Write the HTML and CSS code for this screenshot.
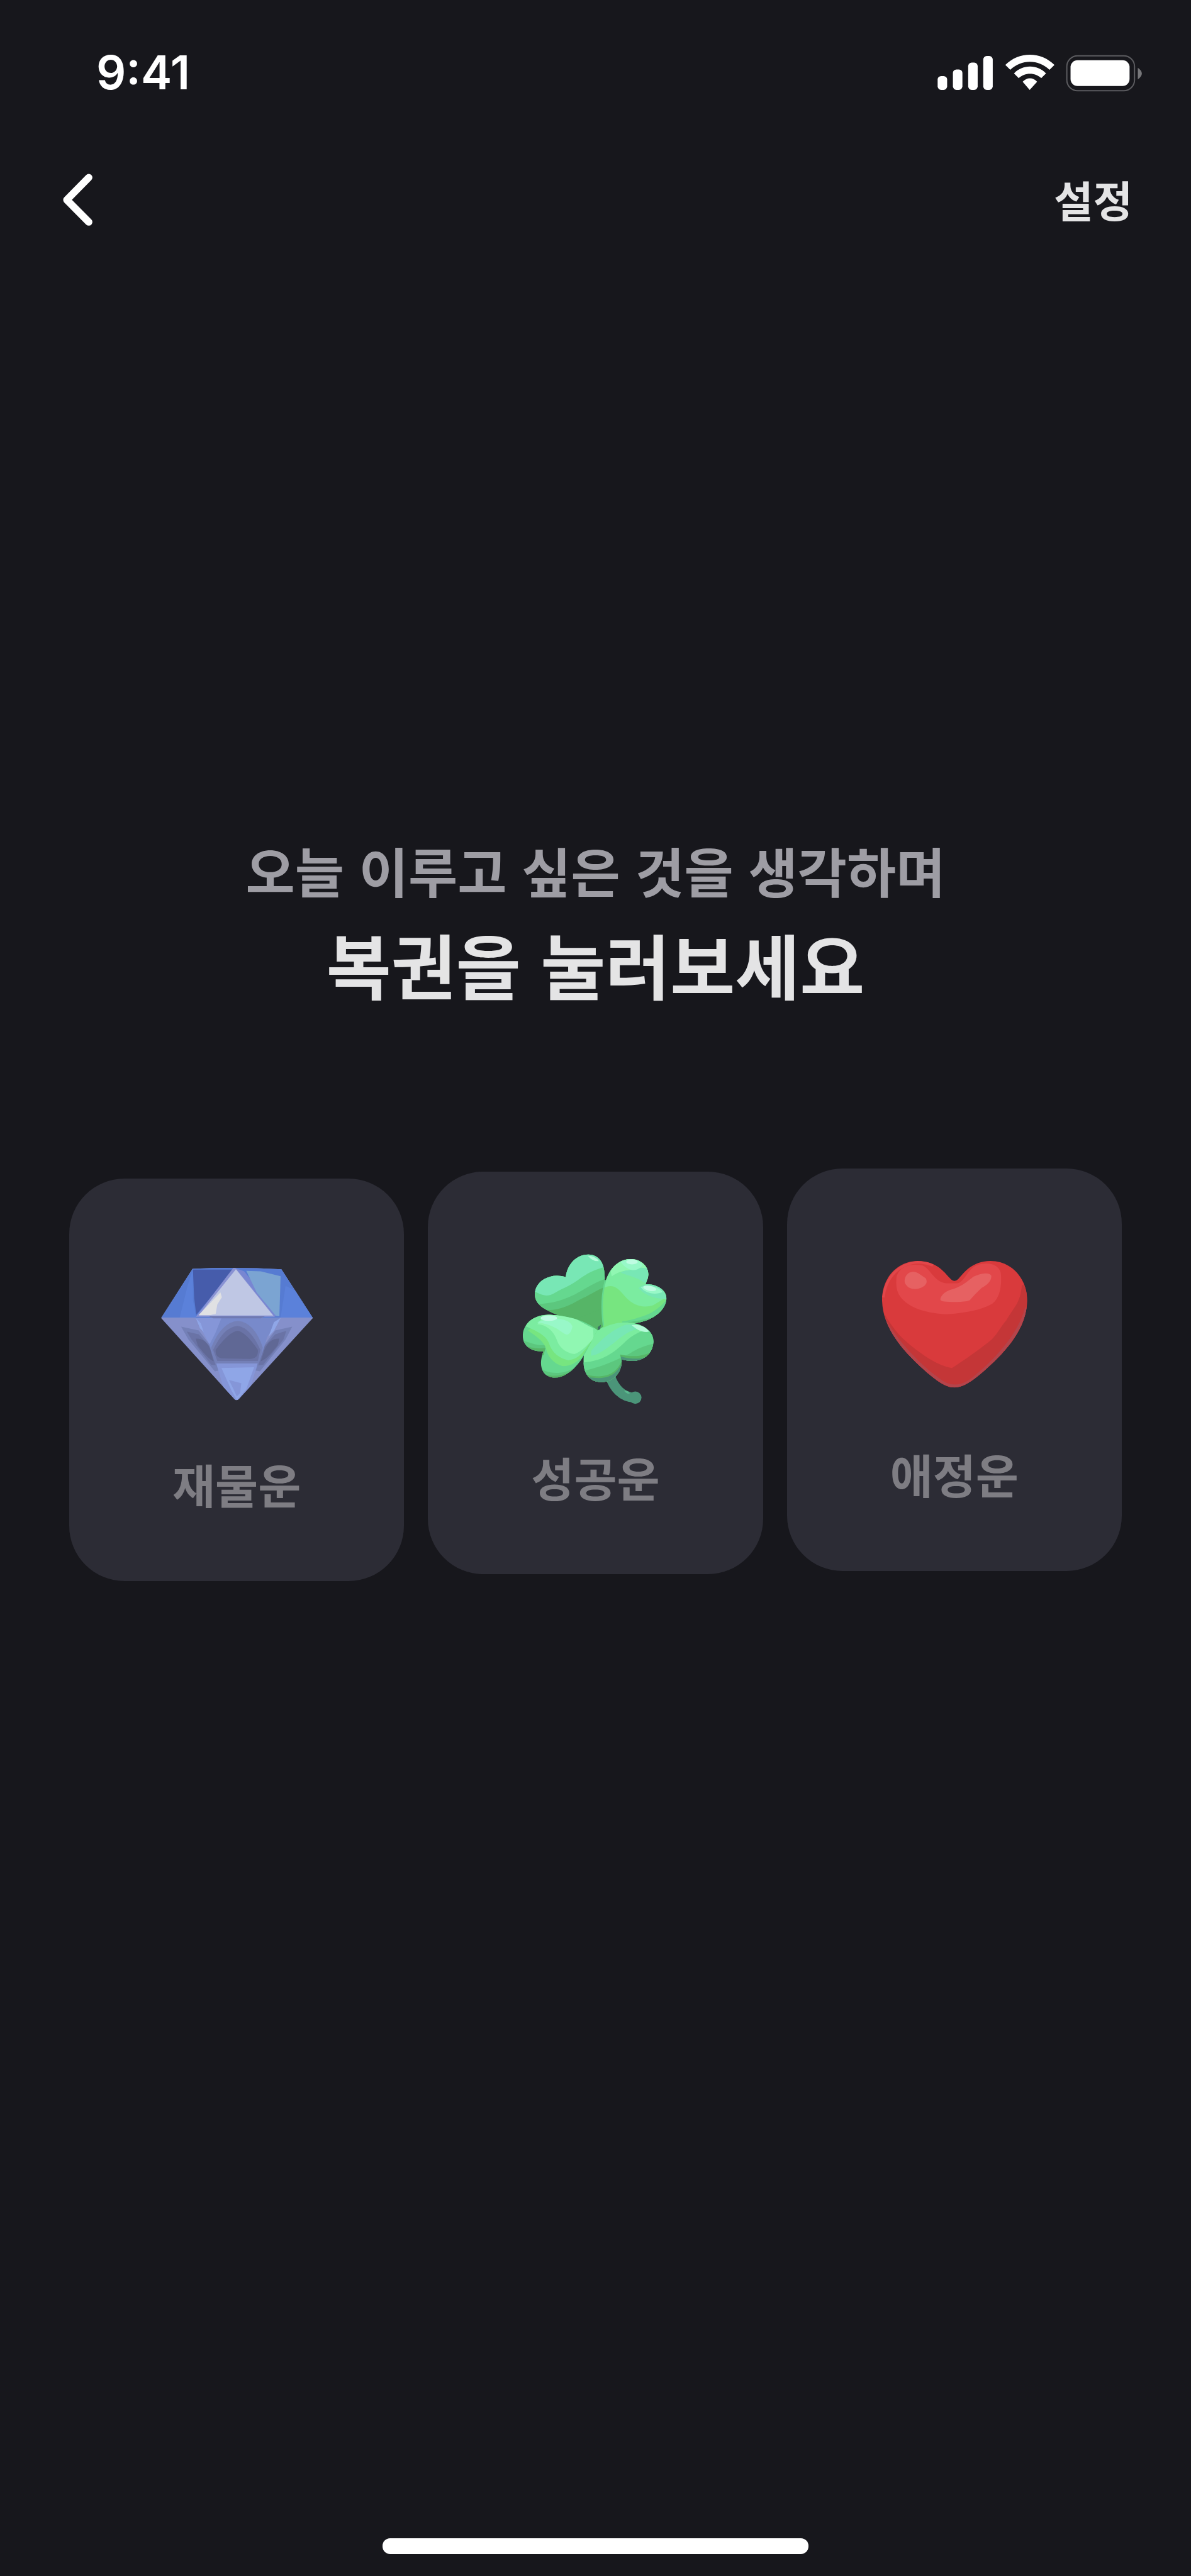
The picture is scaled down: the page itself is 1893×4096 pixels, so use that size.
FILE: index.html
```html
<!DOCTYPE html>
<html lang="ko">
<head>
    <meta charset="UTF-8">
    <meta name="viewport" content="width=device-width, initial-scale=1.0">
    <title>행운복권</title>
    <link rel="stylesheet" href="styles.css">
</head>
<body>
    <div class="screen">
        <div class="status-bar">
            <span class="time">9:41</span>
            <svg class="status-icons" viewBox="150 105 1000 185" aria-hidden="true">
                <!-- signal -->
                <g fill="#fff">
                    <rect x="154" y="214" width="46" height="67" rx="17" />
                    <rect x="228" y="182" width="46" height="99" rx="17" />
                    <rect x="302" y="149" width="46" height="132" rx="17" />
                    <rect x="375" y="117" width="46" height="164" rx="17" />
                </g>
                <!-- wifi -->
                <g fill="#fff">
                    <path d="M482 160 C548 94 654 94 720 160 L696 184 C642 132 560 132 506 184 Z" />
                    <path d="M524 201 C567 157 636 157 679 201 L656 224 C625 196 578 196 547 224 Z" />
                    <path d="M566 242 C584 219 619 219 636 242 L600 281 Z" />
                </g>
                <!-- battery -->
                <rect x="780" y="116" width="328" height="169" rx="52" fill="none" stroke="#5c5c60" stroke-width="6" />
                <rect x="798" y="137" width="286" height="125" rx="34" fill="#fff" />
                <path d="M1124 174 C1150 192 1150 212 1124 230 Z" fill="#77777a" />
            </svg>
        </div>

        <header class="nav">
            <button class="nav-button" type="button" aria-label="뒤로">
                <svg class="back-icon" viewBox="110 680 170 270" aria-hidden="true">
                    <path d="M250 708 L144 816 L250 923" fill="none" stroke="#fff" stroke-width="35" stroke-linecap="round" stroke-linejoin="round" />
                </svg>
            </button>
            <button class="nav-button" type="button">설정</button>
        </header>

        <main class="content">
            <p class="subtitle">오늘 이루고 싶은 것을 생각하며</p>
            <h1 class="title">복권을 눌러보세요</h1>

            <div class="cards">
                <button class="card card-money" type="button">
                    <svg class="card-icon" viewBox="3 0 840 840" aria-hidden="true">
                        <defs>
                            <clipPath id="gem">
                                <path d="M210 108 Q420 98 640 110 L792 346 L434 738 Q425 748 414 740 L58 346 Z" />
                            </clipPath>
                        </defs>
                        <g clip-path="url(#gem)">
                            <rect width="840" height="840" fill="#8590cb" />
                            <!-- crown -->
                            <path d="M40 344 V90 H800 V344 Z" fill="#567bd2" />
                            <path d="M212 108 L186 190 L148 344 H228 L212 260 Z" fill="#5b81da" />
                            <path d="M660 190 L636 344 H800 L720 220 Z" fill="#5b81da" />
                            <path d="M212 112 H410 L228 330 L218 250 Z" fill="#465cab" />
                            <path d="M420 106 L460 120 L630 335 L598 340 Z" fill="#7886d2" />
                            <path d="M470 118 L540 120 L636 144 L630 338 L612 334 L520 222 Z" fill="#7ba4d2" />
                            <path d="M410 100 L420 106 L608 340 H226 Z" fill="#8992d3" />
                            <path d="M420 110 L600 334 H240 Z" fill="#bfc7e4" />
                            <path d="M345 222 L352 246 L330 280 L322 326 L296 332 H240 Z" fill="#e0e1e3" />
                            <!-- pavilion -->
                            <path d="M226 344 H632 L570 440 L525 600 H320 L290 470 Z" fill="#788acb" />
                            <path d="M226 346 H350 L320 420 L292 475 L258 410 Z" fill="#8596d8" />
                            <path d="M226 346 L250 372 L264 414 L246 396 Z M636 346 L604 366 L578 436 L604 408 Z" fill="#8fa6e7" />
                            <path d="M290 338 H560 L540 348 H310 Z" fill="#6f7ab2" />
                            <path d="M300 490 Q350 366 430 360 Q510 368 550 490 L530 580 H325 Z" fill="#7480b7" />
                            <path d="M310 500 Q360 390 428 384 Q490 392 538 500 L526 554 H330 Z" fill="#6a73a6" />
                            <path d="M322 500 Q390 410 430 408 Q468 416 526 500 Q530 542 490 544 L360 542 Q318 540 322 500 Z" fill="#606895" />
                            <path d="M155 388 L240 406 L290 470 L336 600 L318 604 L190 450 Z" fill="#7480b7" />
                            <path d="M182 412 L240 425 L290 480 L322 575 L300 572 L205 450 Z" fill="#6a73a6" />
                            <path d="M225 446 Q270 442 294 492 L312 555 Q290 550 236 480 Z" fill="#606895" />
                            <path d="M692 388 L610 406 L562 470 L516 600 L536 604 L660 450 Z" fill="#7480b7" />
                            <path d="M664 408 L610 425 L560 480 L528 575 L552 572 L650 450 Z" fill="#6a73a6" />
                            <path d="M630 446 Q580 444 558 500 L540 555 Q566 550 622 478 Z" fill="#606895" />
                            <path d="M325 566 H525 L490 680 L425 750 L360 685 Z" fill="#8596d8" />
                            <path d="M350 588 L508 584 L470 690 L425 745 L398 696 Z" fill="#8fa6e7" />
                            <path d="M386 646 L446 662 L440 710 L424 726 L408 690 Z" fill="#8596d8" />
                        </g>
                    </svg>
                    <span class="card-label">재물운</span>
                </button>

                <button class="card card-success" type="button">
                    <svg class="card-icon" viewBox="0 0 840 840" aria-hidden="true">
                        <defs>
                            <clipPath id="leafTopLeft">
                                <path d="M278 182 C284 118 332 70 390 72 C444 76 466 120 466 180 L470 300 L460 420 L430 440 L220 358 C166 334 128 310 128 264 C130 196 210 158 278 182 Z" />
                            </clipPath>
                            <clipPath id="leafTopRight">
                                <path d="M460 430 C446 330 454 240 476 186 C498 130 540 94 594 94 C650 96 688 140 674 188 L664 216 C712 214 766 240 765 286 C760 350 690 396 610 404 L540 412 Z" />
                            </clipPath>
                            <clipPath id="leafBottomLeft">
                                <path d="M430 438 C408 480 380 540 350 585 C310 640 262 672 216 668 C160 660 144 606 170 540 C114 544 66 516 70 458 C76 400 130 362 200 364 C300 370 380 396 430 438 Z" />
                            </clipPath>
                            <clipPath id="leafBottomRight">
                                <path d="M400 480 C440 420 520 396 590 402 C650 408 704 442 702 496 C696 570 630 602 548 580 C552 640 510 690 450 690 C390 688 358 646 364 570 C368 530 380 500 400 480 Z" />
                            </clipPath>
                        </defs>
                        <path d="M492 660 C508 714 548 764 612 765" fill="none" stroke="#4b9579" stroke-width="48" />
                        <circle cx="614" cy="765" r="30" fill="#4b9579" />
                        <path d="M560 732 Q572 726 588 744 Q574 750 560 732 Z" fill="#5bb98e" />
                        <g clip-path="url(#leafTopLeft)">
                            <rect width="840" height="840" fill="#56b567" />
                            <path d="M100 50 H480 V222 C430 244 390 270 350 288 C300 316 260 338 190 342 L100 350 Z" fill="#5cc77e" />
                            <path d="M100 50 H480 V186 C420 206 370 240 320 266 C260 294 200 316 110 310 Z" fill="#65d88f" />
                            <path d="M100 50 H480 V130 C420 142 380 164 336 196 C290 230 250 240 218 262 C180 282 150 264 110 240 Z" fill="#78e7b5" />
                            <path d="M384 78 Q420 78 438 104 Q410 108 384 78 Z" fill="#b4fbd9" />
                        </g>
                        <path d="M400 400 L480 380 L560 400 L520 460 L400 500 Z" fill="#7bec9f" />
                        <path d="M340 380 L462 330 V420 L432 440 Z" fill="#56b567" />
                        <g clip-path="url(#leafTopRight)">
                            <rect width="840" height="840" fill="#77e580" />
                            <path d="M450 240 C500 208 530 232 560 270 C600 318 650 334 700 318 L780 270 V80 H460 Z" fill="#7beca0" />
                            <path d="M780 270 C740 330 690 360 640 374 C600 388 570 394 550 396 L560 430 H780 Z" fill="#65d88f" />
                            <path d="M780 330 C720 380 650 390 580 400 V430 H780 Z" fill="#5cc77e" />
                            <path d="M500 178 C530 156 560 150 600 146 L680 200 V80 H480 Z" fill="#90f7b2" />
                            <path d="M544 160 C570 142 600 154 640 136 L690 140 L664 212 C620 180 590 180 544 160 Z" fill="#78e7b5" />
                            <path d="M542 108 C580 86 630 90 650 124 C620 160 580 156 542 108 Z" fill="#98f8c8" />
                            <ellipse cx="598" cy="108" rx="28" ry="12" fill="#bffce2" />
                            <path d="M630 234 C690 190 760 230 766 290 C720 284 670 280 630 234 Z" fill="#78e7b5" />
                            <path d="M640 230 C680 214 730 230 746 254 C710 270 660 260 640 230 Z" fill="#98f8c8" />
                            <ellipse cx="684" cy="236" rx="32" ry="12" fill="#bffce2" transform="rotate(12 684 236)" />
                        </g>
                        <path d="M470 196 C452 260 450 340 460 416" fill="none" stroke="#65d88f" stroke-width="7" />
                        <g clip-path="url(#leafBottomRight)">
                            <rect width="840" height="840" fill="#7bec9f" />
                            <path d="M720 430 C650 438 610 450 560 500 C510 546 460 590 350 596 V720 H720 Z" fill="#65d88f" />
                            <path d="M720 500 C670 510 630 524 590 550 C520 584 470 610 350 640 V720 H720 Z" fill="#5cc77e" />
                            <path d="M720 528 C670 564 610 572 540 556 L548 590 C520 644 480 680 370 652 V720 H720 Z" fill="#56b567" />
                            <path d="M720 542 C670 580 610 584 544 566 L548 600 C520 654 480 686 370 662 V720 H720 Z" fill="#4b9579" />
                            <path d="M400 540 C440 490 510 430 570 412 C610 406 640 414 650 430 C590 434 560 462 520 492 C470 532 430 560 400 562 Z" fill="#78e7b5" />
                            <path d="M596 414 C640 408 670 426 680 446 C650 452 620 436 596 414 Z" fill="#b4fbd9" />
                        </g>
                        <g clip-path="url(#leafBottomLeft)">
                            <rect width="840" height="840" fill="#65d88f" />
                            <path d="M60 486 C110 500 140 516 180 510 L170 560 H60 Z M140 608 C170 650 260 660 320 620 V690 H140 Z" fill="#5cc77e" />
                            <path d="M60 504 C100 524 140 530 180 524 L170 560 H60 Z M140 636 C180 662 240 670 300 640 V690 H140 Z" fill="#56b567" />
                            <path d="M95 440 C120 460 160 480 180 520 C190 570 220 600 260 612 C300 616 340 590 360 560 L440 438 L200 350 Z" fill="#77e580" />
                            <path d="M85 420 C130 440 180 460 196 500 C210 550 250 576 290 584 C330 580 350 560 380 520 L440 438 L200 350 L100 370 Z" fill="#7beca0" />
                            <path d="M140 410 C180 410 220 440 236 490 C250 530 290 552 320 554 C360 540 390 500 412 480 L410 430 L300 370 L180 360 Z" fill="#90f7b2" />
                            <path d="M140 400 C190 380 290 370 310 420 C306 440 300 456 284 460 C250 450 240 416 140 400 Z" fill="#98f8c8" />
                            <ellipse cx="196" cy="380" rx="40" ry="13" fill="#bffce2" />
                        </g>
                        <path d="M432 424 L448 412 L444 434 L434 438 Z" fill="#3d6f62" />
                    </svg>
                    <span class="card-label">성공운</span>
                </button>

                <button class="card card-love" type="button">
                    <svg class="card-icon" viewBox="-4 -45 840 840" aria-hidden="true">
                        <defs>
                            <clipPath id="heart">
                                <path d="M416 170 C386 172 360 74 238 74 C134 76 64 162 66 266 C70 400 170 510 262 594 C330 656 376 686 416 686 C456 686 504 656 572 594 C670 506 764 400 768 266 C768 160 694 74 590 74 C470 76 446 172 416 170 Z" />
                            </clipPath>
                        </defs>
                        <g clip-path="url(#heart)">
                            <rect width="840" height="840" fill="#d93a3c" />
                            <path d="M60 300 C100 370 130 420 190 470 C260 530 340 582 404 592 C460 556 540 500 596 454 C630 420 640 390 668 360 C700 300 736 280 742 190 L800 200 V720 H60 Z" fill="#c43637" />
                            <path d="M66 340 C130 470 270 600 330 642 C390 694 450 692 510 642 C600 570 730 440 766 300" fill="none" stroke="#b4444b" stroke-width="16" />
                            <path d="M72 250 C82 170 130 90 238 80 C250 80 290 84 312 96" fill="none" stroke="#e2464a" stroke-width="12" />
                            <path d="M136 150 C150 96 210 84 262 96 C300 110 316 176 378 182 H430 C466 176 480 108 530 92 C580 76 630 90 640 130 C646 180 640 250 600 280 C550 310 470 326 376 332 C300 326 210 312 160 254 C134 224 132 190 136 150 Z" fill="#e2474a" />
                            <path d="M176 160 C184 128 214 118 240 132 L278 158 C288 180 276 194 254 204 C224 216 196 208 184 192 C174 182 174 172 176 160 Z" fill="#e66162" />
                            <path d="M348 256 C354 236 376 218 400 212 C450 200 480 170 508 150 C540 134 580 126 594 144 C598 166 576 190 548 204 C526 224 508 244 490 264 C470 274 400 274 366 270 C354 268 346 264 348 256 Z" fill="#e66162" />
                        </g>
                    </svg>
                    <span class="card-label">애정운</span>
                </button>
            </div>
        </main>

        <div class="home-indicator"></div>
    </div>
</body>
</html>
```
FILE: styles.css
```css
* {
    box-sizing: border-box;
}

body {
    margin: 0;
    background-color: #17171c;
    color: #e4e4e5;
    font-family: "Noto Sans CJK KR", sans-serif;
}

button {
    padding: 0;
    border: none;
    background: none;
    color: inherit;
    font: inherit;
    cursor: pointer;
}

svg {
    display: block;
}

.screen {
    display: flex;
    flex-direction: column;
    min-height: 100vh;
    padding-bottom: 35px;
}

/* status bar */
.status-bar {
    display: flex;
    align-items: center;
    justify-content: space-between;
    height: 230px;
    padding: 0 76px 0 153px;
}

.time {
    color: #fff;
    font-family: Inter, sans-serif;
    font-size: 74px;
    font-weight: 600;
    line-height: 80px;
}

.status-icons {
    width: 328px;
    height: 61px;
}

/* navigation */
.nav {
    display: flex;
    align-items: center;
    justify-content: space-between;
    height: 174px;
    padding: 0 93px 0 95px;
}

.nav-button {
    font-size: 68px;
    font-weight: 700;
    line-height: 96px;
}

.back-icon {
    width: 56px;
    height: 89px;
}

/* content */
.content {
    padding: 910px 110px 0;
    text-align: center;
}

.subtitle {
    margin: 0;
    color: #9e9da4;
    font-size: 85px;
    font-weight: 700;
    line-height: 138px;
}

.title {
    margin: 0;
    font-size: 112px;
    font-weight: 700;
    line-height: 160px;
}

.cards {
    display: flex;
    align-items: flex-start;
    gap: 38px;
    margin-top: 246px;
}

.card {
    display: flex;
    flex: 1;
    flex-direction: column;
    align-items: center;
    height: 640px;
    padding-top: 108px;
    border-radius: 88px;
    background-color: #2c2c35;
}

.card-money {
    margin-top: 16px;
}

.card-success {
    margin-top: 5px;
}

.card-icon {
    width: 276px;
    height: 276px;
}

.card-label {
    margin-top: 53px;
    color: #7e7d83;
    font-size: 74px;
    font-weight: 700;
    line-height: 96px;
}

.home-indicator {
    width: 677px;
    height: 25px;
    margin: auto auto 0;
    border-radius: 12px;
    background-color: #fff;
}
```
